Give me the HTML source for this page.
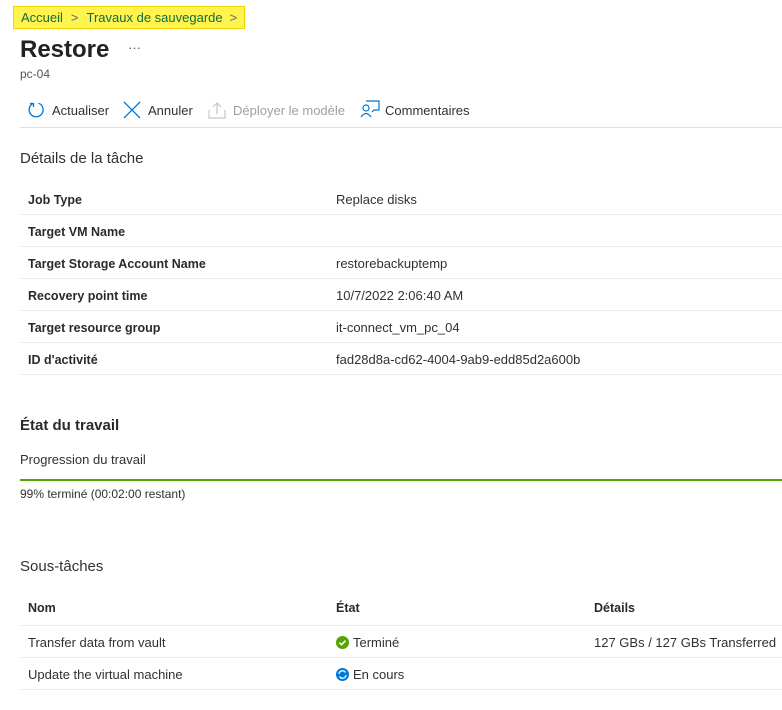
<!DOCTYPE html>
<html><head><meta charset="utf-8"><style>
body{margin:0;width:782px;height:710px;background:#fff;font-family:"Liberation Sans",sans-serif;color:#323130;position:relative;overflow:hidden}
.a{position:absolute;white-space:nowrap}
.bc{left:13px;top:6px;width:230px;height:21px;border:1px solid #f3d200;background:#fff44f}
.line{position:absolute;left:20px;right:0;height:1px;background:#edebe9}
.t{font-size:13px}
.b{font-weight:bold;font-size:12.5px;color:#2b2a29;margin-top:1px}
</style></head><body>
<div class="a bc"></div>
<div class="a" style="left:21px;top:10px;font-size:13px;color:#136b3c">Accueil<span style="color:#666;margin:0 8px">&gt;</span>Travaux de sauvegarde<span style="color:#666;margin-left:7px">&gt;</span></div>
<div class="a" style="left:20px;top:36px;font-size:24px;font-weight:bold;color:#222">Restore</div>
<div class="a" style="left:128px;top:40px;font-size:13px;color:#555">···</div>
<div class="a" style="left:20px;top:67px;font-size:12px;color:#555">pc-04</div>
<svg class="a" style="left:27px;top:101px" width="18" height="18" viewBox="0 0 18 18"><path d="M6 2.5A7 7 0 1 0 11.5 2.2" fill="none" stroke="#0078d4" stroke-width="1.3"/><path d="M3 2.5h3.5v3.5" fill="none" stroke="#0078d4" stroke-width="1.3"/></svg>
<div class="a t" style="left:52px;top:103px">Actualiser</div>
<svg class="a" style="left:123px;top:101px" width="18" height="18"><path d="M1 1L17 17M17 1L1 17" stroke="#0078d4" stroke-width="1.3"/></svg>
<div class="a t" style="left:148px;top:103px">Annuler</div>
<svg class="a" style="left:208px;top:101px" width="18" height="18"><path d="M9 2v11M5 6l4-4 4 4M1 9v8h16V9" fill="none" stroke="#c8c6c4" stroke-width="1.2"/></svg>
<div class="a t" style="left:233px;top:103px;color:#a19f9d">Déployer le modèle</div>
<svg class="a" style="left:360px;top:100px" width="20" height="18"><circle cx="6" cy="8" r="3" fill="none" stroke="#0078d4" stroke-width="1.2"/><path d="M1 17q5-7 10 0M6 1h13v9h-5l-2 2" fill="none" stroke="#0078d4" stroke-width="1.2"/></svg>
<div class="a t" style="left:385px;top:103px">Commentaires</div>
<div class="line" style="top:127px;background:#e1dfdd"></div>
<div class="a" style="left:20px;top:150px;font-size:15px">Détails de la tâche</div>
<div class="a t b" style="left:28px;top:192px">Job Type</div><div class="a t" style="left:336px;top:192px">Replace disks</div>
<div class="line" style="top:214px"></div>
<div class="a t b" style="left:28px;top:224px">Target VM Name</div>
<div class="line" style="top:246px"></div>
<div class="a t b" style="left:28px;top:256px">Target Storage Account Name</div><div class="a t" style="left:336px;top:256px">restorebackuptemp</div>
<div class="line" style="top:278px"></div>
<div class="a t b" style="left:28px;top:288px">Recovery point time</div><div class="a t" style="left:336px;top:288px">10/7/2022 2:06:40 AM</div>
<div class="line" style="top:310px"></div>
<div class="a t b" style="left:28px;top:320px">Target resource group</div><div class="a t" style="left:336px;top:320px">it-connect_vm_pc_04</div>
<div class="line" style="top:342px"></div>
<div class="a t b" style="left:28px;top:352px">ID d'activité</div><div class="a t" style="left:336px;top:352px">fad28d8a-cd62-4004-9ab9-edd85d2a600b</div>
<div class="line" style="top:374px"></div>
<div class="a" style="left:20px;top:417px;font-size:15px;font-weight:bold;color:#2b2a29">État du travail</div>
<div class="a t" style="left:20px;top:452px">Progression du travail</div>
<div class="a" style="left:20px;right:0;top:479px;height:2px;background:#57a300"></div>
<div class="a" style="left:20px;top:487px;font-size:12px">99% terminé (00:02:00 restant)</div>
<div class="a" style="left:20px;top:558px;font-size:15px">Sous-tâches</div>
<div class="a t b" style="left:28px;top:600px">Nom</div><div class="a t b" style="left:336px;top:600px">État</div><div class="a t b" style="left:594px;top:600px">Détails</div>
<div class="line" style="top:625px"></div>
<div class="a t" style="left:28px;top:635px">Transfer data from vault</div>
<svg class="a" style="left:336px;top:636px" width="13" height="13"><circle cx="6.5" cy="6.5" r="6.5" fill="#57a300"/><path d="M3.5 6.7l2 2 4-4" stroke="#fff" stroke-width="1.6" fill="none"/></svg>
<div class="a t" style="left:353px;top:635px">Terminé</div>
<div class="a t" style="left:594px;top:635px">127 GBs / 127 GBs Transferred</div>
<div class="line" style="top:657px"></div>
<div class="a t" style="left:28px;top:667px">Update the virtual machine</div>
<svg class="a" style="left:336px;top:668px" width="13" height="13"><circle cx="6.5" cy="6.5" r="6.5" fill="#0078d4"/><path d="M3 6a3.5 3.5 0 0 1 6.5-1.5M10 7a3.5 3.5 0 0 1-6.5 1.5" stroke="#fff" stroke-width="1.3" fill="none"/></svg>
<div class="a t" style="left:353px;top:667px">En cours</div>
<div class="line" style="top:689px"></div>
</body></html>
